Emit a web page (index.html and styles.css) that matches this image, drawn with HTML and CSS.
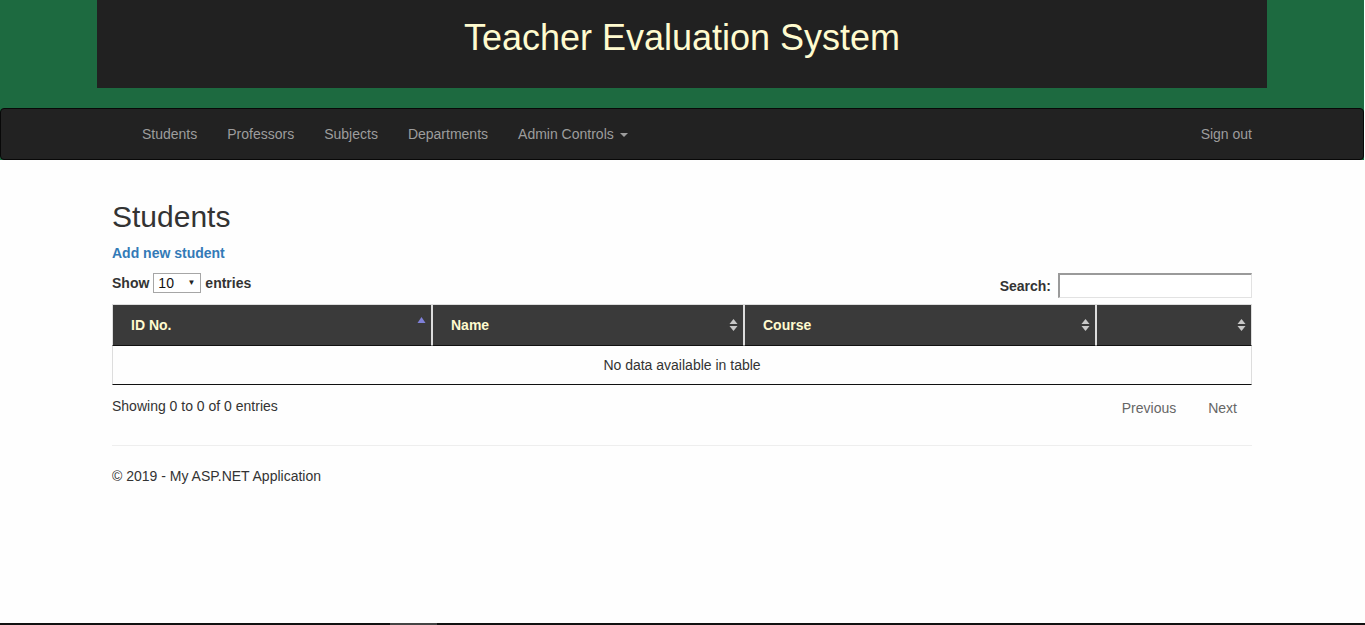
FILE: index.html
```html
<!DOCTYPE html>
<html lang="en">
<head>
<meta charset="utf-8">
<title>Students - Teacher Evaluation System</title>
<link rel="stylesheet" href="styles.css">
</head>
<body>
<div class="top-band">
  <header class="banner">
    <h1 class="banner-title">Teacher Evaluation System</h1>
  </header>
  <nav class="navbar">
    <div class="nav-inner">
      <ul class="nav-list">
        <li><a href="#">Students</a></li>
        <li><a href="#">Professors</a></li>
        <li><a href="#">Subjects</a></li>
        <li><a href="#">Departments</a></li>
        <li><a href="#">Admin Controls <span class="caret"></span></a></li>
      </ul>
      <ul class="nav-list">
        <li><a href="#">Sign out</a></li>
      </ul>
    </div>
  </nav>
</div>

<main class="container">
  <h2 class="page-title">Students</h2>
  <p class="add-link"><a href="#">Add new student</a></p>

  <div class="dt-wrapper">
    <div class="dt-controls">
      <label class="dt-length">Show
        <span class="fake-select">10 <span class="sel-arrow">▼</span></span>
        entries</label>
      <label class="dt-filter">Search: <span class="search-input"></span></label>
    </div>

    <table class="dt-table">
      <colgroup>
        <col class="c1"><col class="c2"><col class="c3"><col class="c4">
      </colgroup>
      <thead>
        <tr>
          <th class="sort-asc">ID No.
            <svg class="sort-icon" width="9" height="19" viewBox="0 0 9 19"><polygon points="0.5,8 4.5,2 8.5,8" fill="#7f80d8"/></svg>
          </th>
          <th>Name
            <svg class="sort-icon" width="9" height="19" viewBox="0 0 9 19"><polygon points="0.5,8 4.5,3 8.5,8" fill="#c8c8c8"/><polygon points="0.5,10 8.5,10 4.5,15" fill="#c8c8c8"/></svg>
          </th>
          <th>Course
            <svg class="sort-icon" width="9" height="19" viewBox="0 0 9 19"><polygon points="0.5,8 4.5,3 8.5,8" fill="#c8c8c8"/><polygon points="0.5,10 8.5,10 4.5,15" fill="#c8c8c8"/></svg>
          </th>
          <th>
            <svg class="sort-icon" width="9" height="19" viewBox="0 0 9 19"><polygon points="0.5,8 4.5,3 8.5,8" fill="#c8c8c8"/><polygon points="0.5,10 8.5,10 4.5,15" fill="#c8c8c8"/></svg>
          </th>
        </tr>
      </thead>
      <tbody>
        <tr><td colspan="4" class="empty">No data available in table</td></tr>
      </tbody>
    </table>

    <div class="dt-bottom">
      <div class="dt-info">Showing 0 to 0 of 0 entries</div>
      <div class="dt-paging">
        <a class="page-btn" href="#">Previous</a>
        <a class="page-btn" href="#">Next</a>
      </div>
    </div>
  </div>

  <hr class="rule">
  <footer class="footer">
    <p>&copy; 2019 - My ASP.NET Application</p>
  </footer>
</main>

<div class="screen-edge"><span class="edge-thumb"></span></div>
</body>
</html>
```

FILE: styles.css
```css
* { box-sizing: border-box; }

html, body {
  margin: 0;
  padding: 0;
  background: #fefefe;
}

body {
  padding-right: 1px;
  font-family: "Liberation Sans", Arial, Helvetica, sans-serif;
  font-size: 14px;
  line-height: 20px;
  color: #333;
}

a { text-decoration: none; }

.top-band {
  background: #1d6a40;
}

.banner {
  width: 1170px;
  height: 88px;
  margin: 0 auto;
  background: #212121;
  padding-top: 18px;
}

.banner-title {
  margin: 0;
  text-align: center;
  font-size: 36px;
  line-height: 40px;
  font-weight: 400;
  color: #fffbcf;
}

.navbar {
  margin-top: 20px;
  height: 52px;
  background: #222;
  border: 1px solid #080808;
  border-radius: 4px;
}

.nav-inner {
  width: 1170px;
  margin: 0 auto;
  padding: 0 0 0 30px;
  display: flex;
  justify-content: space-between;
}

.nav-list {
  list-style: none;
  margin: 0;
  padding: 0;
  display: flex;
}

.nav-list a {
  display: block;
  padding: 15px;
  line-height: 20px;
  color: #9d9d9d;
}

.caret {
  display: inline-block;
  width: 0;
  height: 0;
  margin-left: 2px;
  vertical-align: middle;
  border-top: 4px solid #9d9d9d;
  border-left: 4px solid transparent;
  border-right: 4px solid transparent;
}

.container {
  width: 1170px;
  margin: 0 auto;
  padding: 20px 15px 0;
}

.page-title {
  margin: 20px 0 10px;
  font-size: 30px;
  line-height: 33px;
  font-weight: 500;
  color: #333;
}

.add-link {
  margin: 0 0 10px;
  font-weight: 700;
}

.add-link a { color: #337ab7; }

.dt-controls {
  display: flex;
  justify-content: space-between;
  align-items: flex-start;
  height: 31px;
}

.dt-length,
.dt-filter {
  font-weight: 700;
  display: flex;
  align-items: center;
}

.dt-length { height: 20px; }
.dt-filter { height: 25px; }

.fake-select {
  display: inline-flex;
  align-items: center;
  justify-content: space-between;
  width: 48px;
  height: 20px;
  margin: 0 4px;
  padding: 0 5px 0 4px;
  border: 1px solid #a6a6a6;
  background: #fff;
  font-weight: 400;
  color: #111;
  font-size: 14px;
}

.sel-arrow {
  font-size: 8px;
  color: #222;
}

.search-input {
  display: inline-block;
  width: 194px;
  height: 25px;
  margin-left: 7px;
  background: #fff;
  border: 1px solid #e2e2e2;
  border-top: 2px solid #9a9a9a;
  border-left: 2px solid #9a9a9a;
}

.dt-table {
  width: 1140px;
  table-layout: fixed;
  border-collapse: separate;
  border-spacing: 0;
}

.c1 { width: 320px; }
.c2 { width: 312px; }
.c3 { width: 352px; }
.c4 { width: 156px; }

.dt-table th {
  position: relative;
  background: #3a3a3a;
  color: #fffbcf;
  text-align: left;
  font-weight: 700;
  padding: 10px 18px;
  line-height: 20px;
  border-top: 1px solid #ddd;
  border-left: 1px solid #ddd;
  border-right: 1px solid #ddd;
  border-bottom: 1px solid #111;
}

.sort-icon {
  position: absolute;
  right: 5px;
  top: 11px;
}

.sort-asc .sort-icon { top: 10px; }

.dt-table td.empty {
  text-align: center;
  padding: 9px 10px;
  line-height: 20px;
  border-left: 1px solid #ddd;
  border-right: 1px solid #ddd;
  border-bottom: 1px solid #111;
}

.dt-bottom {
  display: flex;
  justify-content: space-between;
  align-items: flex-start;
  height: 40px;
}

.dt-info { padding-top: 11px; }

.dt-paging {
  padding-top: 7px;
  display: flex;
}

.page-btn {
  display: block;
  padding: 6px 15px;
  margin-left: 2px;
  color: #666;
  line-height: 20px;
}

.rule {
  margin: 20px 0 20px;
  border: 0;
  border-top: 1px solid #eee;
}

.footer p { margin: 0 0 10px; }

.screen-edge {
  position: fixed;
  left: 0;
  right: 0;
  bottom: 0;
  height: 2px;
  background: #111;
}

.edge-thumb {
  position: absolute;
  left: 390px;
  width: 47px;
  top: 0;
  height: 2px;
  background: #444;
}
```
